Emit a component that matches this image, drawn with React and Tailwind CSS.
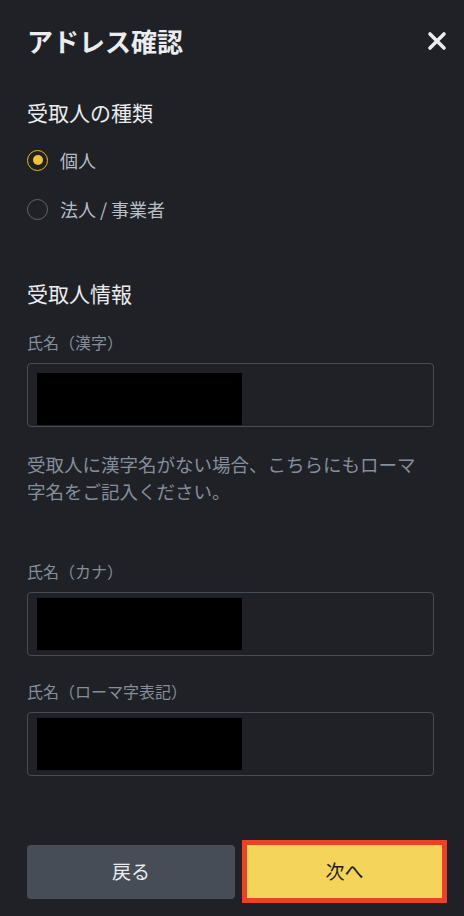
const FONT = { fontFamily: '"Noto Sans CJK JP", "Noto Sans", sans-serif' };

function Radio({ checked, label }) {
  return (
    <label className="flex h-6 items-center gap-[12px]">
      <span
        className={`flex h-[21px] w-[21px] items-center justify-center rounded-full border-[1.5px] ${
          checked ? 'border-[#f0b90b]' : 'border-[#5e6673]'
        }`}
      >
        {checked && <span className="h-[10px] w-[10px] rounded-full bg-[#f0c33c]" />}
      </span>
      <span className="text-[18px] leading-6 text-[#b7bdc6]">{label}</span>
    </label>
  );
}

function Field({ label, className = '', padTop = 'pt-[5px]' }) {
  return (
    <div className={className}>
      <p className="text-base leading-5 text-[#848e9c]">{label}</p>
      <div className={`mr-[3px] mt-[11px] h-[64px] rounded-[4px] border border-[#474d57] pl-[9px] ${padTop}`}>
        <div className="h-[52px] w-[205px] bg-black" />
      </div>
    </div>
  );
}

export default function App() {
  return (
    <div className="min-h-[916px] w-[464px] bg-[#1f2126] px-[27px] pt-[25px]" style={FONT}>
      <div className="flex h-8 items-center justify-between">
        <h1 className="text-[26px] font-bold leading-8 text-[#eaecef]">アドレス確認</h1>
        <svg width="20" height="20" viewBox="0 0 20 20" className="mr-[-10px]">
          <path d="M3 3 L17 17 M17 3 L3 17" stroke="#eaecef" strokeWidth="3.6" strokeLinecap="round" />
        </svg>
      </div>

      <h2 className="mt-[41px] text-[21px] leading-7 text-[#eaecef]">受取人の種類</h2>
      <div className="mt-[22px] flex flex-col gap-[25px]">
        <Radio checked label="個人" />
        <Radio label="法人 / 事業者" />
      </div>

      <h2 className="mt-[58px] text-[21px] leading-7 text-[#eaecef]">受取人情報</h2>
      <Field label="氏名（漢字）" className="mt-[25px]" padTop="pt-[9px]" />
      <p className="mt-[24px] text-[18.5px] leading-[27px] text-[#848e9c]">
        受取人に漢字名がない場合、こちらにもローマ
        <br />
        字名をご記入ください。
      </p>
      <Field label="氏名（カナ）" className="mt-[56px]" />
      <Field label="氏名（ローマ字表記）" className="mt-[25px]" />

      <div className="mt-[64px] flex items-center">
        <button className="h-[54px] w-[208px] shrink-0 rounded-[4px] bg-[#474d57] text-[19px] text-[#eaecef]">
          戻る
        </button>
        <div className="ml-[7px] shrink-0 border-[5px] border-[#e94227]">
          <button className="block h-[53px] w-[195px] bg-[#f5d45b] text-[19px] text-[#1e2026]">次へ</button>
        </div>
      </div>
    </div>
  );
}
